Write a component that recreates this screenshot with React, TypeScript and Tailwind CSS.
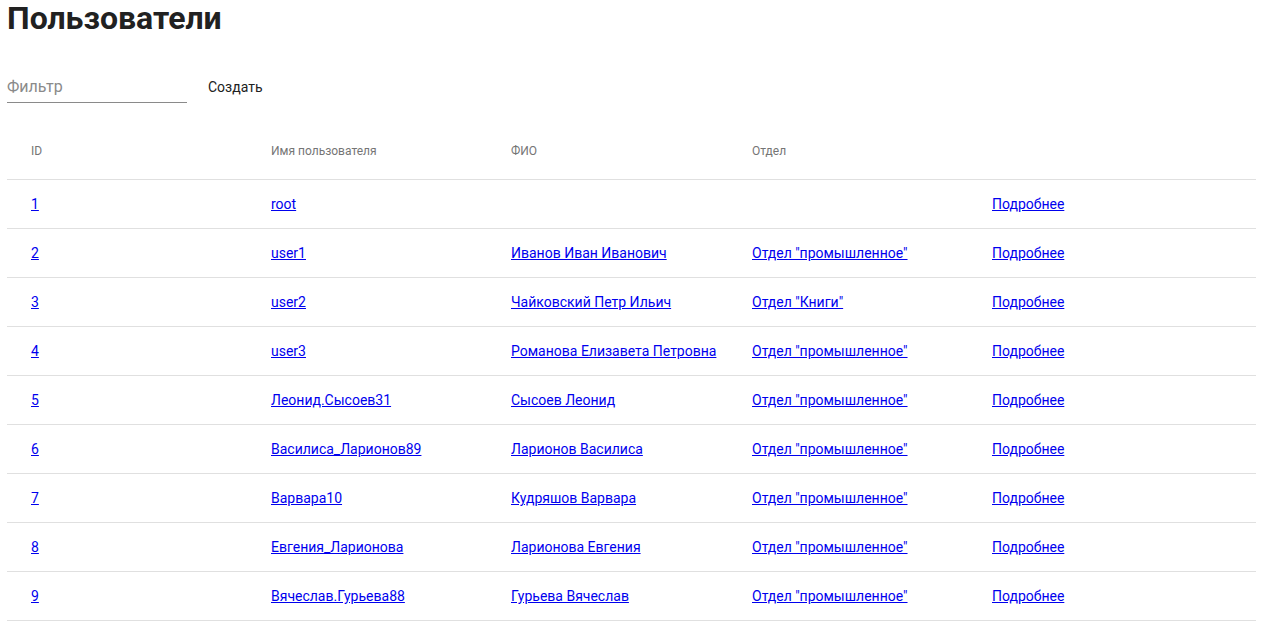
import React from "react";

const rows = [
  ["1", "root", "", ""],
  ["2", "user1", "Иванов Иван Иванович", 'Отдел "промышленное"'],
  ["3", "user2", "Чайковский Петр Ильич", 'Отдел "Книги"'],
  ["4", "user3", "Романова Елизавета Петровна", 'Отдел "промышленное"'],
  ["5", "Леонид.Сысоев31", "Сысоев Леонид", 'Отдел "промышленное"'],
  ["6", "Василиса_Ларионов89", "Ларионов Василиса", 'Отдел "промышленное"'],
  ["7", "Варвара10", "Кудряшов Варвара", 'Отдел "промышленное"'],
  ["8", "Евгения_Ларионова", "Ларионова Евгения", 'Отдел "промышленное"'],
  ["9", "Вячеслав.Гурьева88", "Гурьева Вячеслав", 'Отдел "промышленное"'],
];

const widths = ["w-[240px]", "w-[240px]", "w-[241px]", "w-[240px]", "w-[288px]"];

function Cell({ children, i }: { children?: React.ReactNode; i: number }) {
  return <div className={`${widths[i]} shrink-0 pl-6 flex items-center`}>{children}</div>;
}

function L({ t }: { t: string }) {
  if (!t) return null;
  return (
    <a href="#" className="text-[#0000ee] underline text-[14px] leading-[20px]">
      {t}
    </a>
  );
}

export default function App() {
  return (
    <div className="bg-white min-h-[627px] px-[7px] text-[#212121]" style={{ fontFamily: "Roboto, 'Noto Sans', sans-serif" }}>
      <h1 className="text-[32px] font-bold leading-[36px] m-0">Пользователи</h1>
      <div className="flex items-center mt-[35px] h-[32px]">
        <div className="w-[180px] h-[32px] border-b border-[#8a8a8a] flex items-center">
          <span className="text-[16px] text-[#8a8a8a]">Фильтр</span>
        </div>
        <button className="ml-[21px] text-[14px] text-[#212121]">Создать</button>
      </div>
      <div className="mt-[20px] w-[1249px]">
        <div className="flex h-[57px] border-b border-[#e0e0e0] text-[12px] text-[#757575]">
          <Cell i={0}>ID</Cell>
          <Cell i={1}>Имя пользователя</Cell>
          <Cell i={2}>ФИО</Cell>
          <Cell i={3}>Отдел</Cell>
          <Cell i={4}></Cell>
        </div>
        {rows.map((r) => (
          <div key={r[0]} className="flex h-[49px] border-b border-[#e0e0e0]">
            <Cell i={0}><L t={r[0]} /></Cell>
            <Cell i={1}><L t={r[1]} /></Cell>
            <Cell i={2}><L t={r[2]} /></Cell>
            <Cell i={3}><L t={r[3]} /></Cell>
            <Cell i={4}><L t="Подробнее" /></Cell>
          </div>
        ))}
      </div>
    </div>
  );
}
